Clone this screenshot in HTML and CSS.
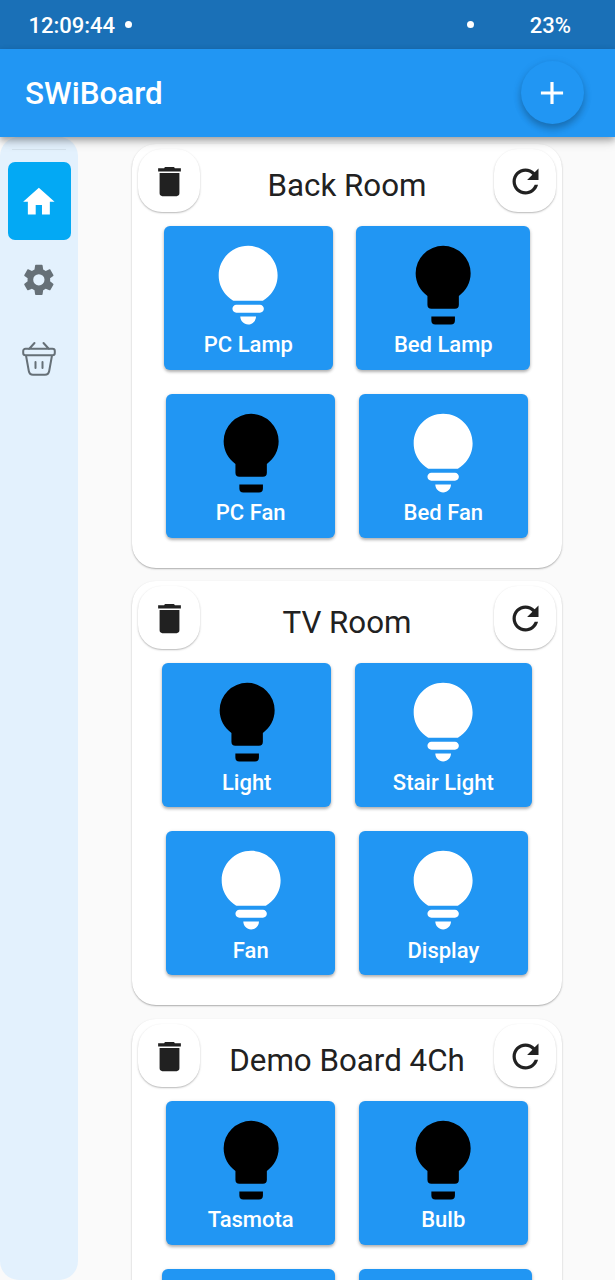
FILE: index.html
```html
<!DOCTYPE html>
<html lang="en">
<head>
<meta charset="utf-8">
<title>SWiBoard</title>
<link rel="stylesheet" href="styles.css">
</head>
<body>
<svg class="sprite" aria-hidden="true">
  <symbol id="bulb-on" viewBox="0 0 24 24"><path d="M12 22c1.1 0 2-.9 2-2h-4c0 1.100.9 2 2 2zm-3-3h6c.55 0 1-.45 1-1s-.45-1-1-1H9c-.55 0-1 .45-1 1s.45 1 1 1zm3-17C7.860 2 4.500 5.360 4.500 9.500c0 3.820 2.660 5.860 3.770 6.500h7.460c1.110-.64 3.770-2.680 3.770-6.500C19.500 5.360 16.140 2 12 2z"/></symbol>
  <symbol id="bulb-off" viewBox="0 0 24 24"><path d="M12 2A7 7 0 0 0 5 9C5 11.380 6.190 13.470 8 14.740V17A1 1 0 0 0 9 18H15A1 1 0 0 0 16 17V14.740C17.810 13.470 19 11.380 19 9A7 7 0 0 0 12 2M9 21A1 1 0 0 0 10 22H14A1 1 0 0 0 15 21V20H9Z"/></symbol>
  <symbol id="trash" viewBox="0 0 24 24"><path d="M5 3.900H8.700C8.900 3.300 9.200 3 9.800 3H14.200C14.800 3 15.100 3.300 15.300 3.900H19V5.900H5ZM5.900 6.700H18.100V19.300C18.100 20.400 17.400 21 16.400 21H7.600C6.600 21 5.900 20.400 5.900 19.300Z"/></symbol>
  <symbol id="refresh" viewBox="0 0 24 24"><path d="M17.650 6.350C16.200 4.900 14.210 4 12 4c-4.420 0-7.990 3.580-7.990 8s3.570 8 7.990 8c3.730 0 6.840-2.550 7.730-6h-2.080c-.82 2.330-3.040 4-5.650 4-3.310 0-6-2.690-6-6s2.690-6 6-6c1.660 0 3.140.69 4.220 1.780L13 11h7V4z"/></symbol>
</svg>
<div class="screen">
  <header class="status">
    <span class="clock">12:09:44</span><i class="dot"></i>
    <i class="dot dot-right"></i><span class="battery">23%</span>
  </header>
  <div class="appbar">
    <h1 class="app-title">SWiBoard</h1>
    <button class="add" aria-label="Add"><svg viewBox="0 0 24 24"><path d="M19 13h-6v6h-2v-6H5v-2h6V5h2v6h6z"/></svg></button>
  </div>
  <div class="body">
    <nav class="rail">
      <hr class="rule">
      <a class="nav-item active"><svg viewBox="0 0 24 24"><path d="M10 20v-6h4v6h5v-8h3L12 3 2 12h3v8z"/></svg></a>
      <a class="nav-item"><svg viewBox="0 0 24 24"><path d="M19.140 12.940c.04-.3.06-.61.06-.94 0-.32-.02-.64-.07-.94l2.030-1.580c.18-.14.23-.41.12-.61l-1.920-3.320c-.12-.22-.37-.29-.59-.22l-2.390.96c-.5-.38-1.030-.7-1.620-.94l-.36-2.540c-.04-.24-.24-.41-.48-.41h-3.840c-.24 0-.43.17-.47.41l-.36 2.540c-.59.24-1.130.57-1.620.94l-2.390-.96c-.22-.08-.47 0-.59.22L2.740 8.870c-.12.21-.08.47.12.61l2.030 1.580c-.05.3-.09.63-.09.94s.02.64.07.94l-2.030 1.580c-.18.14-.23.41-.12.61l1.920 3.320c.12.22.37.29.59.22l2.390-.96c.5.38 1.030.7 1.620.94l.36 2.540c.05.24.24.41.48.41h3.840c.24 0 .44-.17.47-.41l.36-2.540c.59-.24 1.130-.56 1.620-.94l2.390.96c.22.08.47 0 .59-.22l1.920-3.320c.12-.22.07-.47-.12-.61zM12 15.600a3.600 3.600 0 1 1 0-7.200 3.600 3.600 0 0 1 0 7.200z"/></svg></a>
      <a class="nav-item"><svg class="basket" viewBox="0 0 36 36"><path d="M8 8L13.500 2M28 8L22.500 2M4.500 7.700H31.500A2.300 2.300 0 0 1 33.800 10V12A2.300 2.300 0 0 1 31.500 14.300H4.500A2.300 2.300 0 0 1 2.200 12V10A2.300 2.300 0 0 1 4.500 7.700ZM5 14.500L7.800 30Q8.500 33.800 12 33.800H24Q27.500 33.800 28.200 30L31 14.500M14.500 21V27M21.500 21V27"/></svg></a>
    </nav>
    <main class="boards">
      <section class="card">
        <div class="card-head"><button class="mini"><svg><use href="#trash"/></svg></button><h2 class="room">Back Room</h2><button class="mini"><svg><use href="#refresh"/></svg></button></div>
        <div class="row">
          <button class="tile on"><svg><use href="#bulb-on"/></svg><span>PC Lamp</span></button>
          <button class="tile wide"><svg><use href="#bulb-off"/></svg><span>Bed Lamp</span></button>
        </div>
        <div class="row">
          <button class="tile"><svg><use href="#bulb-off"/></svg><span>PC Fan</span></button>
          <button class="tile on"><svg><use href="#bulb-on"/></svg><span>Bed Fan</span></button>
        </div>
      </section>
      <section class="card">
        <div class="card-head"><button class="mini"><svg><use href="#trash"/></svg></button><h2 class="room">TV Room</h2><button class="mini"><svg><use href="#refresh"/></svg></button></div>
        <div class="row">
          <button class="tile"><svg><use href="#bulb-off"/></svg><span>Light</span></button>
          <button class="tile on wider"><svg><use href="#bulb-on"/></svg><span>Stair Light</span></button>
        </div>
        <div class="row">
          <button class="tile on"><svg><use href="#bulb-on"/></svg><span>Fan</span></button>
          <button class="tile on"><svg><use href="#bulb-on"/></svg><span>Display</span></button>
        </div>
      </section>
      <section class="card">
        <div class="card-head"><button class="mini"><svg><use href="#trash"/></svg></button><h2 class="room">Demo Board 4Ch</h2><button class="mini"><svg><use href="#refresh"/></svg></button></div>
        <div class="row">
          <button class="tile"><svg><use href="#bulb-off"/></svg><span>Tasmota</span></button>
          <button class="tile"><svg><use href="#bulb-off"/></svg><span>Bulb</span></button>
        </div>
        <div class="row">
          <button class="tile wide"></button>
          <button class="tile wide"></button>
        </div>
      </section>
    </main>
  </div>
</div>
</body>
</html>
```
FILE: styles.css
```css
* { box-sizing: border-box; }
body { margin: 0; font-family: Roboto, "Noto Sans", sans-serif; overflow: hidden; }
button { border: 0; padding: 0; font: inherit; }
h1, h2 { margin: 0; }
.sprite { display: none; }
.screen { display: flex; flex-direction: column; width: 615px; height: 1280px; overflow: hidden; background: #fafafa; }

.status { display: flex; align-items: center; flex: none; height: 49px; padding: 2px 44px 0 28.500px; background: #1a70b7; color: #fff; font-size: 22px; font-weight: 500; }
.dot { width: 7px; height: 7px; margin: -2px 0 0 9.500px; border-radius: 50%; background: #fff; }
.dot-right { margin: -3px 56px 0 auto; }

.appbar { display: flex; align-items: center; justify-content: space-between; flex: none; height: 88px; padding: 0 31.500px 0 25px; background: #2196f3; box-shadow: 0 3px 6px rgba(0,0,0,.24), 0 5px 10px rgba(0,0,0,.16); z-index: 1; }
.app-title { padding-top: 2px; color: #fff; font-size: 31.4px; font-weight: 500; line-height: 40px; }
.add { display: grid; place-items: center; width: 63px; height: 63px; margin-top: -1px; border-radius: 50%; background: #2196f3; box-shadow: 0 5px 7px rgba(0,0,0,.2), 0 2px 10px rgba(0,0,0,.1); }
.add svg { width: 38px; height: 38px; fill: #fff; }

.body { display: flex; flex: 1; min-height: 0; }
.rail { width: 78px; border-radius: 19px; background: #e3f1fd; padding: 12px 7.500px 0 8px; }
.rule { height: 1px; margin: 0 5px 12px 4px; border: 0; background: #d4e2ed; }
.nav-item { display: grid; place-items: center; height: 78px; padding: 1px 1px 0 0; border-radius: 7px; }
.nav-item svg { width: 37.700px; height: 37.700px; fill: #667077; }
.active { background: #03a9f4; }
.nav-item.active svg { fill: #fff; }
.nav-item .basket { width: 36px; height: 36px; margin-top: 2px; fill: none; stroke: #667077; stroke-width: 2; stroke-linecap: round; }

.boards { display: flex; flex-direction: column; gap: 13.300px; padding: 7px 0 0 54px; }
.card { flex: none; width: 430px; height: 424px; border-radius: 24px; background: #fff; box-shadow: 0 1px 1.500px rgba(0,0,0,.26), 0 1px 3px rgba(0,0,0,.07); }
.card-head { display: flex; justify-content: space-between; height: 82px; padding: 5px 6px 0; }
.mini { display: grid; place-items: center; width: 62px; height: 63px; padding: 2px 0 0 1.500px; border-radius: 24px; background: #fff; box-shadow: 0 1px 1.500px rgba(0,0,0,.22), 0 1px 3px rgba(0,0,0,.08); }
.mini svg { width: 39px; height: 39px; fill: #212121; }
.room { padding-top: 17.200px; color: #212121; font-size: 31.300px; font-weight: 400; line-height: 40px; white-space: nowrap; }
.row { display: flex; justify-content: center; gap: 23.600px; margin-bottom: 24px; }
.tile { display: flex; flex-direction: column; align-items: center; width: 169px; height: 144px; padding-top: 12.200px; border-radius: 6px; background: #2196f3; color: #fff; font-size: 22px; font-weight: 500; line-height: 26.700px; box-shadow: 0 2px 3px rgba(0,0,0,.25), 0 1px 4px rgba(0,0,0,.1); white-space: nowrap; }
.wide { width: 173.700px; }
.wider { width: 177px; }
.tile svg { width: 94.300px; height: 94.300px; fill: #000; }
.tile.on svg { fill: #fff; }
```
